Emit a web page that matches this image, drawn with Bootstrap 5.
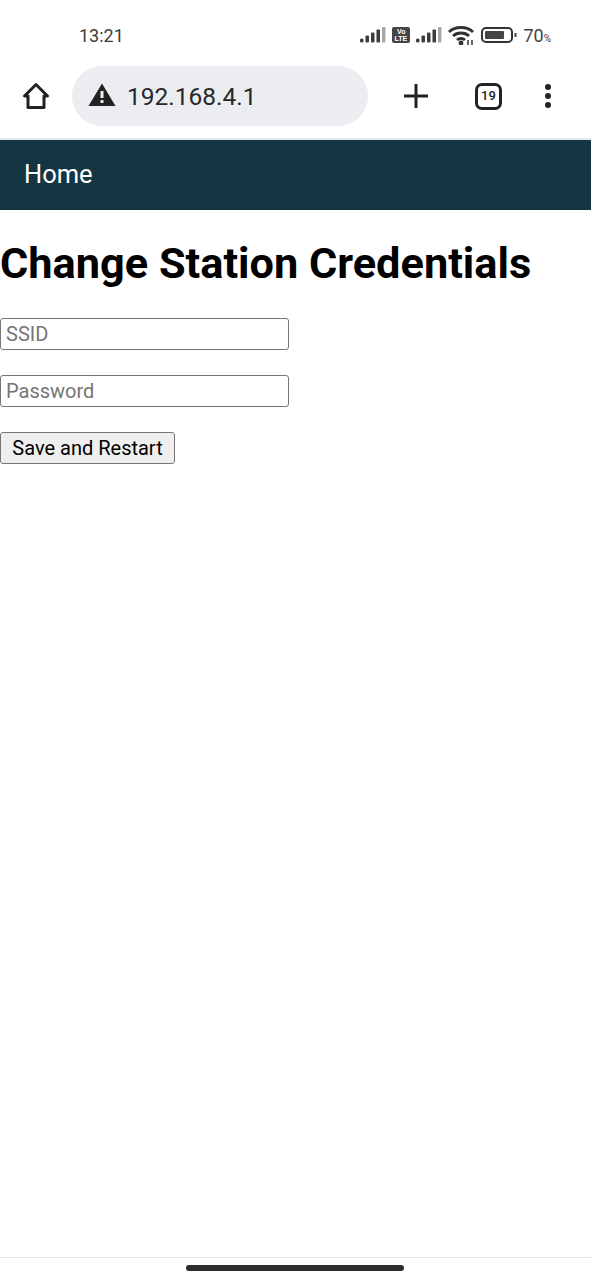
<!DOCTYPE html>
<html lang="en">
<head>
  <meta charset="UTF-8">
  <title>Change Station Credentials</title>
  <link href="https://cdn.jsdelivr.net/npm/bootstrap@5.3.3/dist/css/bootstrap.min.css" rel="stylesheet">
  <script src="https://cdn.jsdelivr.net/npm/bootstrap@5.3.3/dist/js/bootstrap.bundle.min.js"></script>
  <style>
    body { font-family: Roboto, sans-serif; background: #fff; color: #000; height: 1280px; overflow: hidden; }
    .status-bar { height: 66px; padding: 4px 38px 0 79px; color: #3c3c3c; font-size: 18px; }
    .status-icons { gap: 6px; }
    .status-pct { font-size: 18px; color: #444; margin-right: 2px; }
    .status-pct small { font-size: 10px; }
    .volte-text { font-family: "Liberation Sans", sans-serif; font-size: 7px; font-weight: 700; fill: #fff; }
    .chrome-bar { height: 74px; padding: 0 38px 12px 22px; border-bottom: 2px solid #e4e8e8; }
    .url-pill { width: 296px; height: 60px; background: #ebedf1; border-radius: 30px; margin-left: 22px; padding: 2px 0 0 16px; font-size: 24.5px; color: #26282b; gap: 11px; }
    .warn-icon { margin-top: -6px; }
    .chrome-plus { margin-left: 35px; }
    .tab-count { width: 27px; height: 27px; margin-left: 46px; border: 3px solid #222; border-radius: 7px; font-size: 13px; font-weight: 500; color: #222; }
    .chrome-menu { margin-left: 41px; }
    .site-nav { height: 70px; background: #143642; padding: 0 0 1px 24px; }
    .site-nav a { color: #fff; font-size: 25.500px; text-decoration: none; }
    .page-title { font-size: 43.300px; font-weight: 700; line-height: 50px; margin: 29px 0 29px; }
    .plain-input { display: block; width: 289px; height: 32px; border: 1px solid #767676; border-radius: 3px; padding: 0 5px; font-size: 20px; margin-bottom: 25px; font-family: Roboto, sans-serif; }
    .plain-input::placeholder { color: #757575; opacity: 1; }
    .plain-btn { width: 175px; height: 32px; border: 1px solid #767676; border-radius: 3px; background: #efefef; padding: 0; font-size: 20px; color: #000; font-family: Roboto, sans-serif; }
    .gesture-bar { height: 23px; border-top: 1px solid #e2e2e2; }
    .gesture-pill { width: 218px; height: 6px; background: #2c2c2c; border-radius: 3px; margin: 7px 1px 0 0; }
  </style>
</head>
<body class="d-flex flex-column">

  <div class="status-bar d-flex align-items-center justify-content-between flex-shrink-0">
    <span>13:21</span>
    <div class="status-icons d-flex align-items-center">
      <svg width="26" height="18" viewBox="0 0 26 18" fill="#3c3c3c"><rect x="0" y="12.500" width="3.500" height="4" rx="1.500"/><rect x="5.500" y="9.500" width="3.500" height="7" rx="1"/><rect x="11" y="6.500" width="3.500" height="10" rx="1"/><rect x="16.500" y="3.500" width="3.500" height="13" rx="1"/><rect x="22" y="1" width="3.500" height="15.500" rx="1" fill="#a8a8a8"/></svg>
      <svg width="18" height="18" viewBox="0 0 18 18"><rect x="0" y="1" width="18" height="16" rx="2" fill="#444"/><text class="volte-text" x="5" y="7.500">Vo</text><text class="volte-text" x="2.500" y="14.500">LTE</text></svg>
      <svg width="26" height="18" viewBox="0 0 26 18" fill="#3c3c3c"><rect x="0" y="12.500" width="3.500" height="4" rx="1.500"/><rect x="5.500" y="9.500" width="3.500" height="7" rx="1"/><rect x="11" y="6.500" width="3.500" height="10" rx="1"/><rect x="16.500" y="3.500" width="3.500" height="13" rx="1"/><rect x="22" y="1" width="3.500" height="15.500" rx="1" fill="#a8a8a8"/></svg>
      <svg width="27" height="20" viewBox="0 0 27 20" fill="none" stroke="#333" stroke-width="2.800"><path d="M1 7C7 1 19 1 25 7"/><path d="M5 11C9 7 17 7 21 11"/><path d="M9 15c2-2 6-2 8 0"/><circle cx="13" cy="18" r="1" fill="#333"/><path d="M20 15v5M24 15v5" stroke-width="1.500"/></svg>
      <svg width="36" height="18" viewBox="0 0 36 18"><rect x="1" y="2" width="30" height="14" rx="4" fill="none" stroke="#333" stroke-width="2"/><rect x="4" y="5" width="19" height="8" rx="1" fill="#444"/><rect x="33.500" y="7" width="2" height="4" fill="#444"/></svg>
      <span class="status-pct">70<small>%</small></span>
    </div>
  </div>

  <div class="chrome-bar d-flex align-items-center flex-shrink-0">
    <svg width="28" height="28" viewBox="0 0 28 28" fill="none" stroke="#222" stroke-width="3" stroke-linejoin="round"><path d="M14 2.500 2.500 14H6v11.500h16V14h3.500z"/></svg>
    <div class="url-pill d-flex align-items-center">
      <svg class="warn-icon" width="28" height="23" viewBox="0 0 28 23"><path d="M14 .5 .5 23h27z" fill="#222"/><rect x="12.500" y="8" width="3" height="7" fill="#ebedf1"/><rect x="12.500" y="17" width="3" height="3" fill="#ebedf1"/></svg>
      <span>192.168.4.1</span>
    </div>
    <svg class="chrome-plus" width="26" height="26" viewBox="0 0 26 26" stroke="#222" stroke-width="3"><path d="M13 1v24M1 13h24"/></svg>
    <div class="tab-count d-flex align-items-center justify-content-center">19</div>
    <svg class="chrome-menu" width="10" height="26" viewBox="0 0 10 26" fill="#222"><circle cx="5" cy="4" r="3"/><circle cx="5" cy="13" r="3"/><circle cx="5" cy="22" r="3"/></svg>
  </div>

  <nav class="site-nav d-flex align-items-center flex-shrink-0"><a href="#">Home</a></nav>

  <main class="flex-grow-1">
    <h1 class="page-title">Change Station Credentials</h1>
    <form>
      <input class="plain-input" type="text" placeholder="SSID">
      <input class="plain-input" type="password" placeholder="Password">
      <button class="plain-btn" type="button">Save and Restart</button>
    </form>
  </main>

  <div class="gesture-bar flex-shrink-0 d-flex justify-content-center">
    <div class="gesture-pill"></div>
  </div>

</body>
</html>
